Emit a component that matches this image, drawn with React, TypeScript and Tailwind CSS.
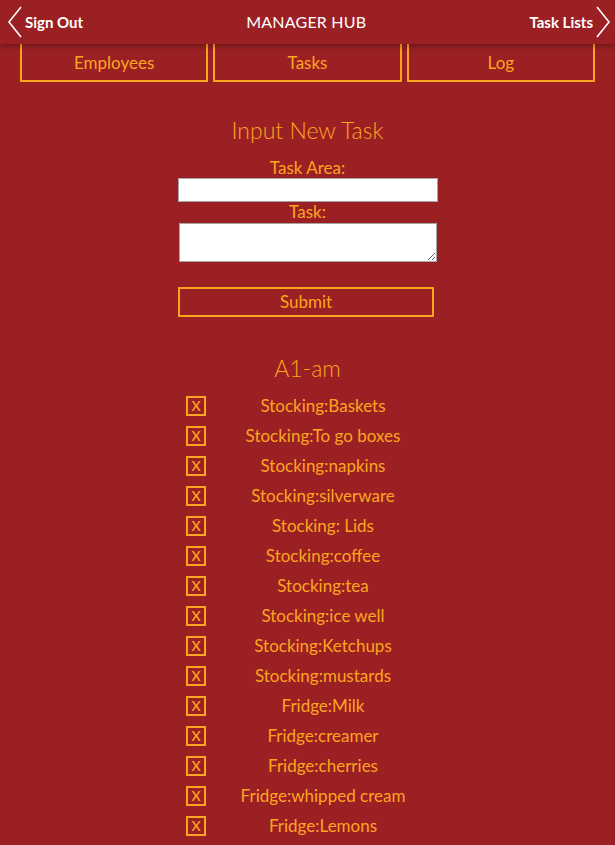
import React, { useState } from "react";

const tasks = [
  "Stocking:Baskets",
  "Stocking:To go boxes",
  "Stocking:napkins",
  "Stocking:silverware",
  "Stocking: Lids",
  "Stocking:coffee",
  "Stocking:tea",
  "Stocking:ice well",
  "Stocking:Ketchups",
  "Stocking:mustards",
  "Fridge:Milk",
  "Fridge:creamer",
  "Fridge:cherries",
  "Fridge:whipped cream",
  "Fridge:Lemons",
];

const Chevron: React.FC<{ dir: "left" | "right" }> = ({ dir }) => (
  <svg width="16" height="32" viewBox="0 0 16 32" fill="none">
    {dir === "left" ? (
      <polyline points="14,1 2,16 14,31" stroke="white" strokeWidth="1.6" />
    ) : (
      <polyline points="2,1 14,16 2,31" stroke="white" strokeWidth="1.6" />
    )}
  </svg>
);

const App: React.FC = () => {
  const [area, setArea] = useState("");
  const [task, setTask] = useState("");

  return (
    <div
      className="min-h-screen bg-[#9b2024] text-[#fba51f]"
      style={{ fontFamily: "Lato, 'Open Sans', sans-serif" }}
    >
      <header className="relative z-10 h-[44px] bg-[#9b2024] shadow-[0_3px_5px_rgba(0,0,0,0.25)] flex items-center justify-between text-white">
        <button className="flex items-center gap-[2px] pl-[7px] text-[15px] font-bold">
          <Chevron dir="left" />
          Sign Out
        </button>
        <h1 className="text-[16px] tracking-[0.2px]">MANAGER HUB</h1>
        <button className="flex items-center gap-[2px] pr-[4px] text-[15px] font-bold">
          Task Lists
          <Chevron dir="right" />
        </button>
      </header>

      <nav className="flex justify-center gap-[5px] px-[20px]">
        {["Employees", "Tasks", "Log"].map((label) => (
          <button
            key={label}
            className="w-[189px] h-[38px] border-2 border-t-0 border-[#fba51f] text-[17px] pt-[1px]"
          >
            {label}
          </button>
        ))}
      </nav>

      <form
        className="flex flex-col items-center mt-[34px]"
        onSubmit={(e) => e.preventDefault()}
      >
        <h2 className="text-[23px] font-light leading-[28px]">Input New Task</h2>
        <label className="text-[17px] leading-[20px] mt-[14px]">Task Area:</label>
        <input
          type="text"
          value={area}
          onChange={(e) => setArea(e.target.value)}
          className="w-[260px] h-[24px] bg-white border border-[#a5a5a5] text-black px-1"
        />
        <label className="text-[17px] leading-[20px]">Task:</label>
        <textarea
          value={task}
          onChange={(e) => setTask(e.target.value)}
          className="w-[258px] h-[39px] bg-white border border-[#a5a5a5] text-black mt-[1px] block"
        />
        <button
          type="submit"
          className="mt-[25px] w-[256px] h-[30px] border-2 border-[#fba51f] text-[17px] ml-[-3px]"
        >
          Submit
        </button>
      </form>

      <section className="flex flex-col items-center mt-[37px] pb-[5px]">
        <h2 className="text-[23px] font-light leading-[28px]">A1-am</h2>
        <ul className="mt-[9px] flex flex-col">
          {tasks.map((t) => (
            <li key={t} className="flex items-center h-[30px] w-[254px] ml-[11px]">
              <span className="w-[20px] h-[20px] border-2 border-[#fba51f] flex items-center justify-center text-[14px] font-semibold leading-none">
                X
              </span>
              <span className="flex-1 text-center text-[17px]">{t}</span>
            </li>
          ))}
        </ul>
      </section>
    </div>
  );
};

export default App;
